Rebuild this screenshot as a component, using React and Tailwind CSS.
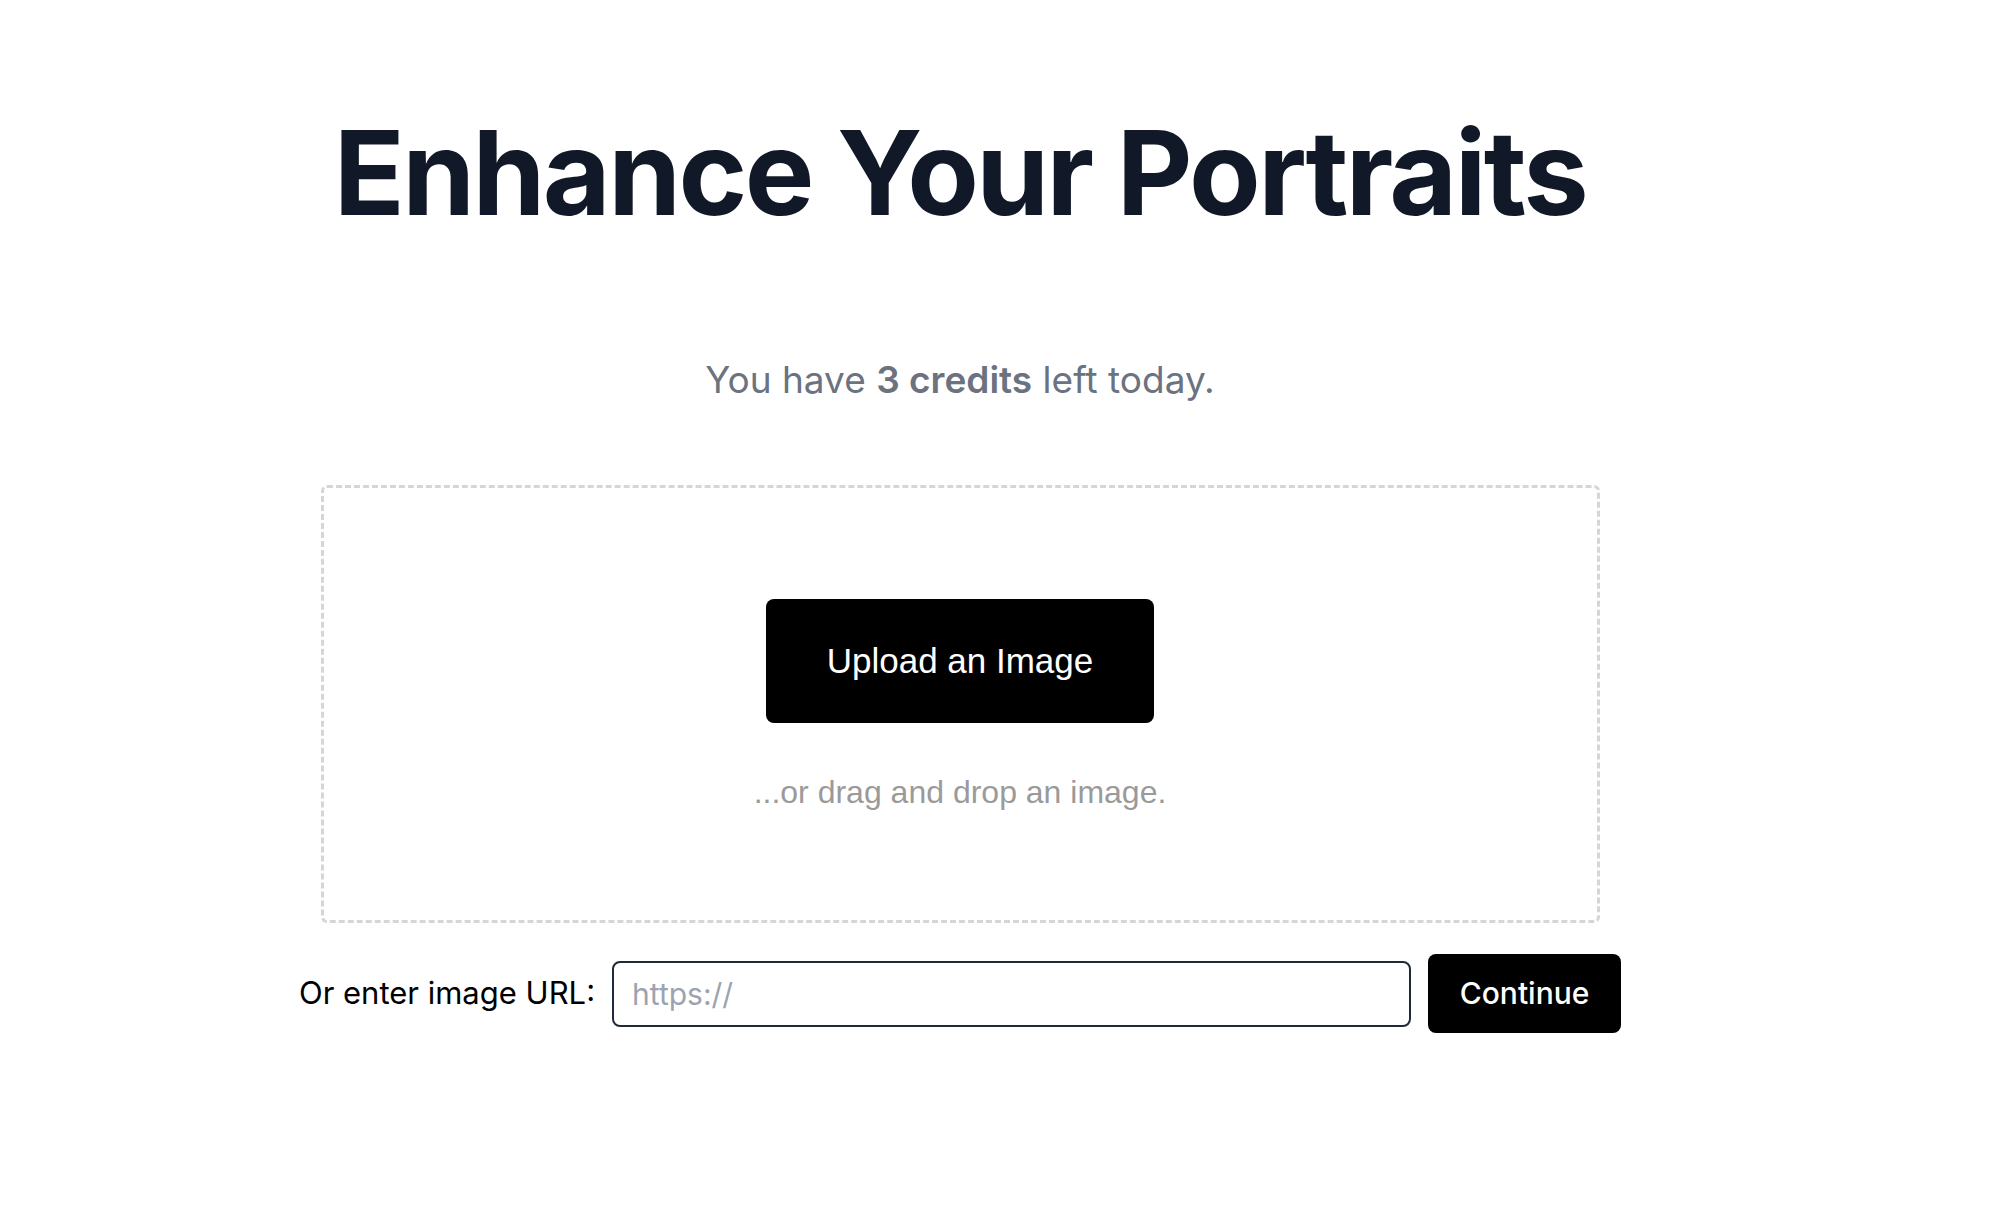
export default function App() {
  return (
    <div className="min-h-[1212px] bg-white">
      <div className="w-[1920px] flex flex-col items-center pt-[114px]">
        <h1 className="text-[117px] leading-none font-bold tracking-[-0.022em] text-[#111827] font-['Inter',sans-serif]">
          Enhance Your Portraits
        </h1>

        <p className="mt-[130px] text-[37px] leading-none text-[#6b7280] font-['Inter',sans-serif]">
          You have <span className="font-semibold">3 credits</span> left today.
        </p>

        <div className="mt-[87px] w-[1279px] border-[3px] border-dashed border-[#d6d6d6] rounded-md flex flex-col items-center pt-[111px] pb-[112px]">
          <button className="w-[388px] h-[124px] bg-black text-white rounded-lg text-[35px] font-['Liberation_Sans',Arial,sans-serif]">
            Upload an Image
          </button>
          <p className="mt-[53px] text-[32px] leading-none text-[#9a9a9a] font-['Liberation_Sans',Arial,sans-serif]">
            ...or drag and drop an image.
          </p>
        </div>

        <div className="mt-[31px] flex items-center gap-[17px] font-['Inter',sans-serif]">
          <label className="text-[31px] text-black">Or enter image URL:</label>
          <input
            type="text"
            placeholder="https://"
            className="w-[799px] h-[66px] border-2 border-[#1f2937] rounded-lg px-[18px] text-[30px] placeholder:text-[#9ca3af] outline-none"
          />
          <button className="w-[193px] h-[79px] bg-black text-white rounded-lg text-[30px] font-medium">
            Continue
          </button>
        </div>
      </div>
    </div>
  )
}
